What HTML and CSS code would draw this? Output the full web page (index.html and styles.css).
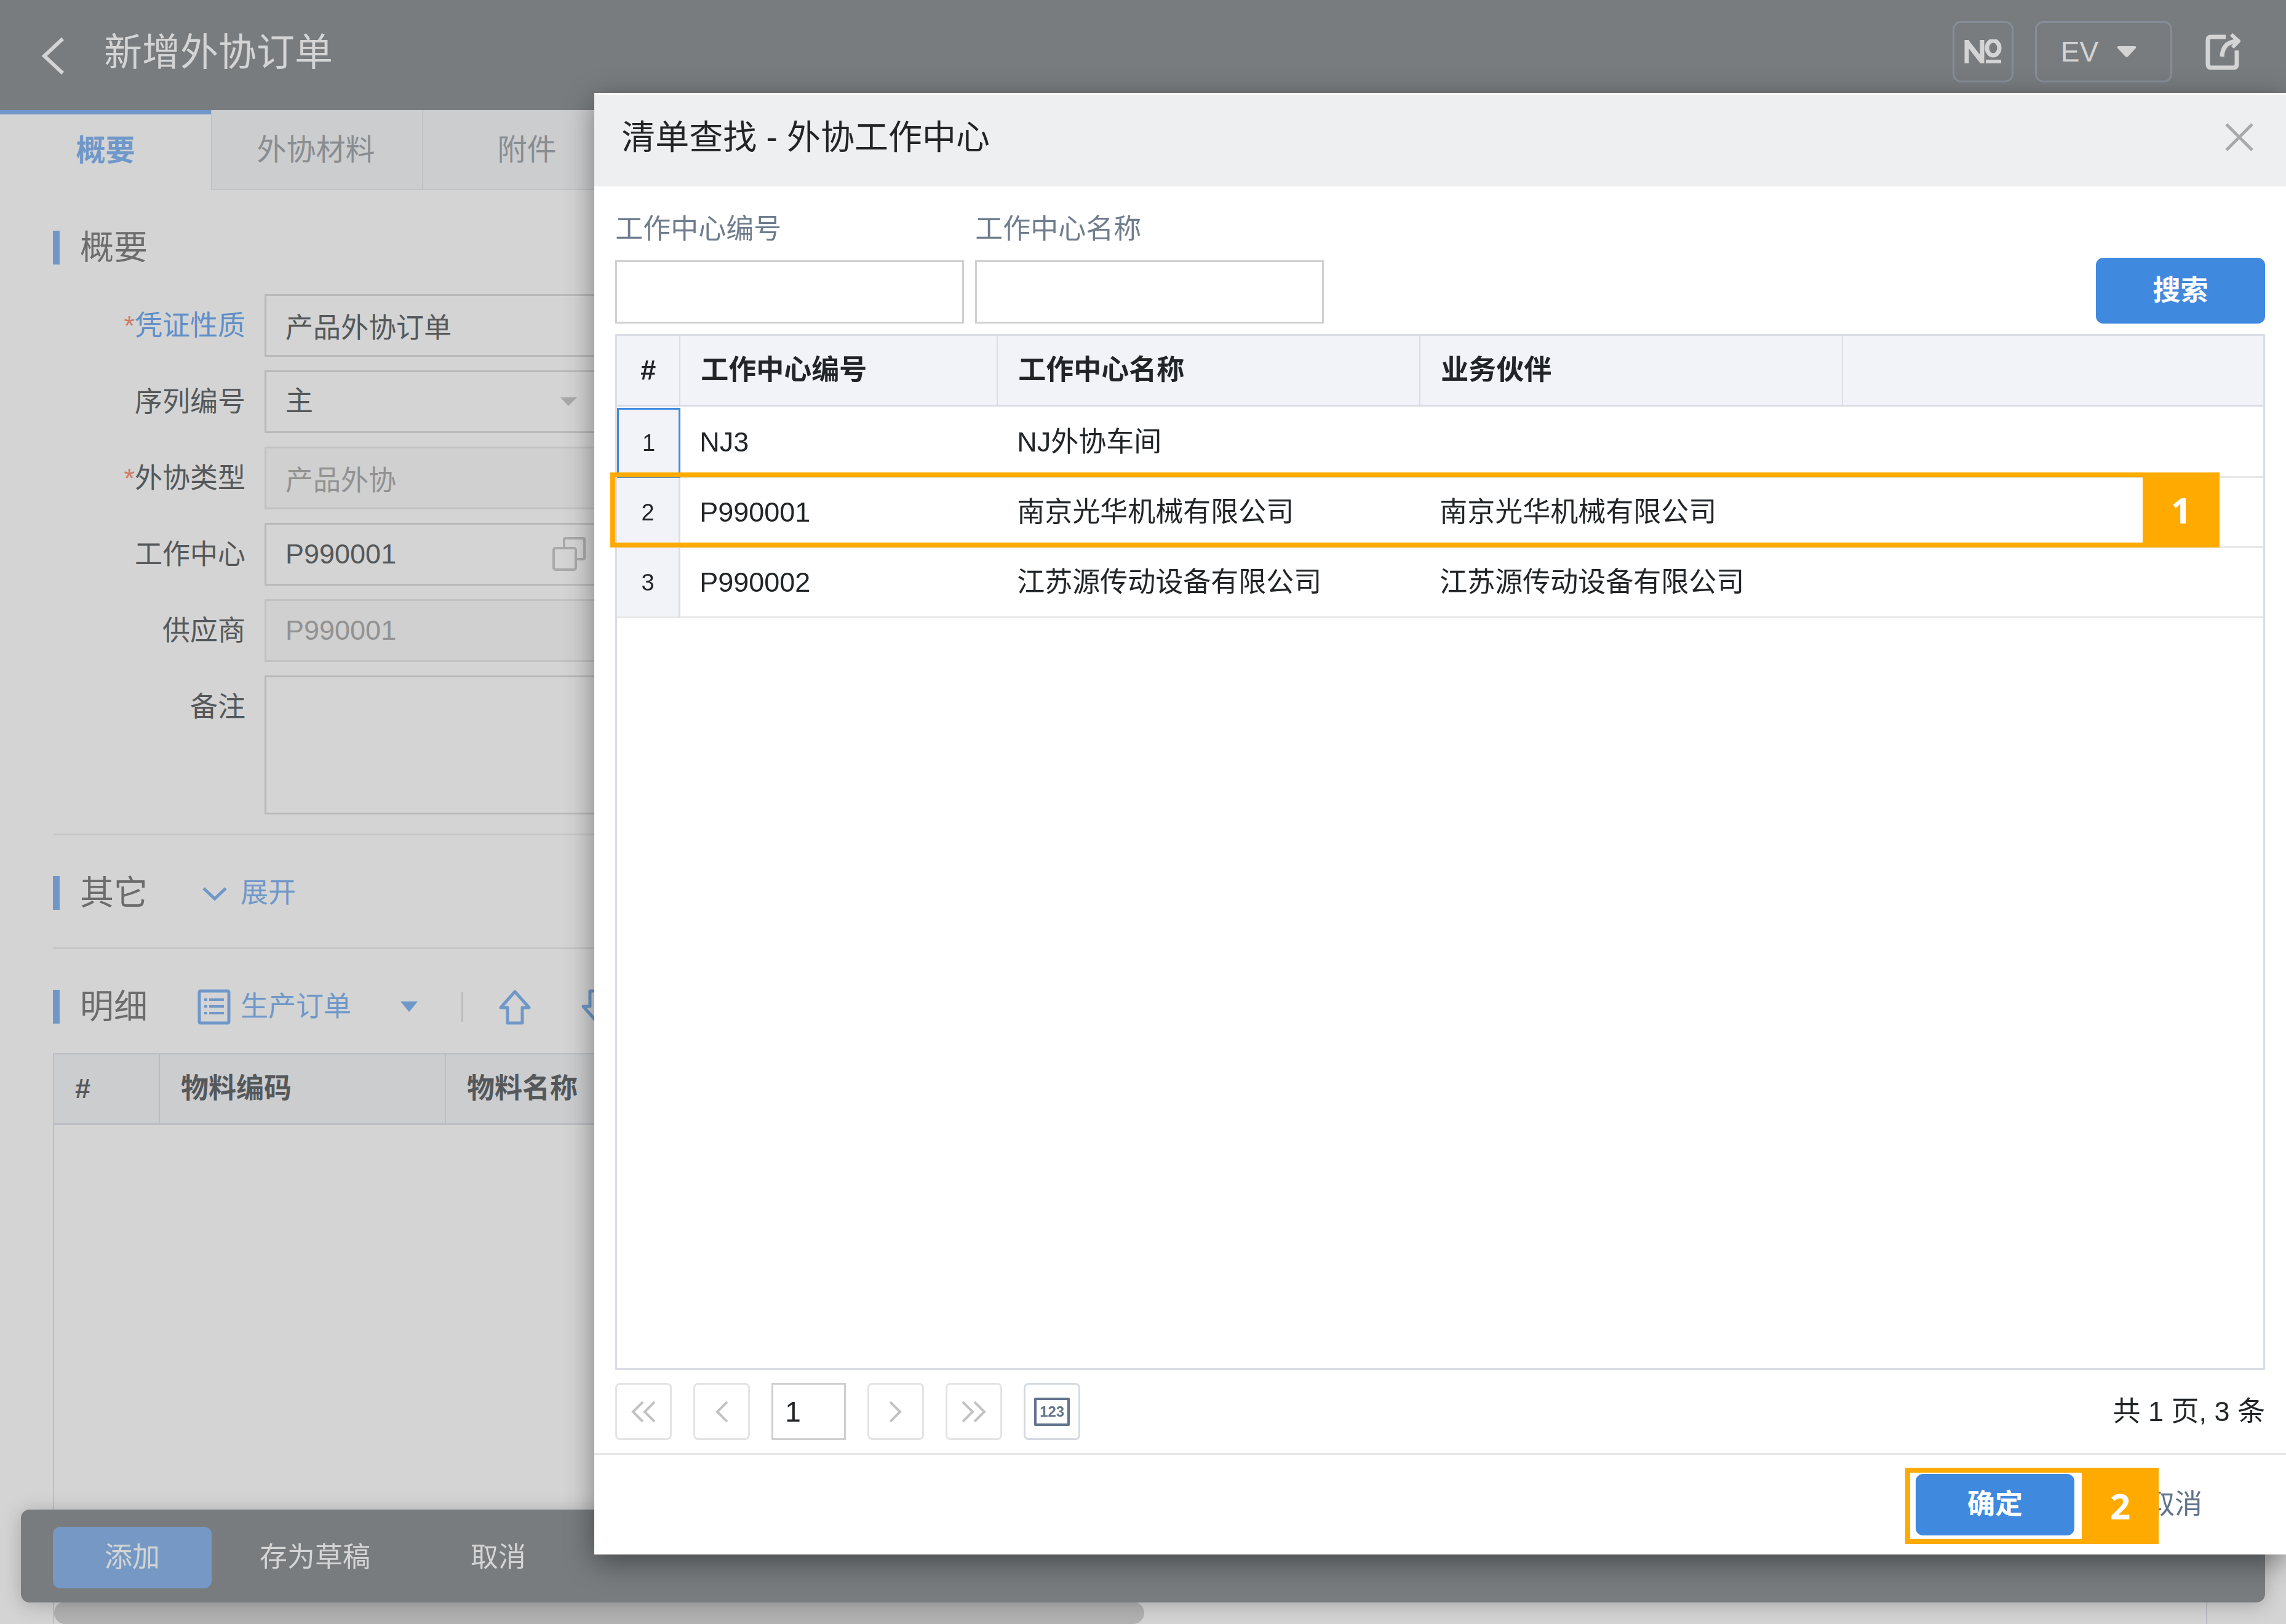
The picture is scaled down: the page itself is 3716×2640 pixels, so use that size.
FILE: index.html
```html
<!DOCTYPE html>
<html lang="zh-CN">
<head>
<meta charset="utf-8">
<title>新增外协订单</title>
<link rel="stylesheet" href="styles.css">
</head>
<body>
<div class="page">
  <header class="topbar">
    <button class="icon-btn back" type="button" aria-label="返回">
      <svg width="40" height="60" viewBox="0 0 40 60" fill="none" stroke="currentColor" stroke-width="6"><path d="M35 2 L5 30 L35 58"/></svg>
    </button>
    <h1 class="topbar-title">新增外协订单</h1>
    <div class="topbar-actions">
      <button class="outline-btn number-btn" type="button" aria-label="编号">
        <svg width="62" height="40" viewBox="0 0 62 40" fill="none" stroke="currentColor" stroke-width="7"><path d="M4 39 V1"/><path d="M4 4 L29 36" stroke-width="8"/><path d="M29 39 V1"/><ellipse cx="47" cy="14" rx="10" ry="12"/><path d="M35 36 H60" stroke-width="6"/></svg>
      </button>
      <button class="outline-btn user-btn" type="button">EV
        <svg width="32" height="18" viewBox="0 0 32 18" fill="currentColor"><path d="M2 0 H30 Q32 1 31 3 L18 17 Q16 18 14 17 L1 3 Q0 1 2 0 Z"/></svg>
      </button>
      <button class="icon-btn share" type="button" aria-label="分享">
        <svg width="60" height="60" viewBox="0 0 60 60" fill="none" stroke="currentColor" stroke-width="7" stroke-linejoin="round"><path d="M33 6 H9 Q4 6 4 11 V50 Q4 56 9 56 H46 Q51 56 51 50 V28"/><path d="M27 38 Q28 15 50 13"/><path d="M42 2 L54 13 L44 23" stroke-width="6"/></svg>
      </button>
    </div>
  </header>

  <nav class="tabs">
    <button class="tab tab-active" type="button">概要</button>
    <button class="tab" type="button">外协材料</button>
    <button class="tab" type="button">附件</button>
  </nav>

  <main class="content">
    <section class="section summary">
      <div class="section-head"><h2>概要</h2></div>
      <div class="form">
        <label for="nature"><span class="required">*</span><span class="link-label">凭证性质</span></label>
        <input id="nature" class="field" type="text" value="产品外协订单">
        <label for="serial">序列编号</label>
        <div class="field-wrap">
          <select id="serial" class="field"><option>主</option></select>
          <svg class="field-icon" width="54" height="14" viewBox="0 0 54 14" fill="currentColor"><path d="M13 0 H40 L26 14 Z"/></svg>
        </div>
        <label for="type"><span class="required">*</span>外协类型</label>
        <input id="type" class="field" type="text" value="产品外协" disabled>
        <label for="center">工作中心</label>
        <div class="field-wrap">
          <input id="center" class="field" type="text" value="P990001">
          <svg class="field-icon" width="54" height="56" viewBox="0 0 54 56" fill="none" stroke="currentColor" stroke-width="4"><path d="M19 18 V4 Q19 2 21 2 H50 Q52 2 52 4 V34 Q52 36 50 36 H38"/><rect x="2" y="18" width="36" height="35" rx="3"/></svg>
        </div>
        <label for="supplier">供应商</label>
        <input id="supplier" class="field" type="text" value="P990001" disabled>
        <label for="remark">备注</label>
        <textarea id="remark" class="field field-area"></textarea>
      </div>
    </section>

    <section class="section others">
      <div class="section-head">
        <h2>其它</h2>
        <button class="text-btn" type="button">
          <svg width="54" height="40" viewBox="0 0 54 40" fill="none" stroke="currentColor" stroke-width="5"><path d="M10 12 L28 29 L46 12"/></svg>展开
        </button>
      </div>
    </section>

    <section class="section details">
      <div class="section-head">
        <h2>明细</h2>
        <button class="text-btn" type="button">
          <svg width="54" height="58" viewBox="0 0 54 58" fill="none" stroke="currentColor" stroke-width="5"><rect x="3" y="3" width="48" height="52" rx="2"/><path d="M19 17 H43 M19 28 H43 M19 39 H43 M11 17 H16 M11 28 H16 M11 39 H16" stroke-width="4"/></svg>生产订单
        </button>
        <button class="icon-btn blue menu-caret" type="button" aria-label="更多">
          <svg width="28" height="17" viewBox="0 0 28 17" fill="currentColor"><path d="M0 0 H28 L14 17 Z"/></svg>
        </button>
        <span class="divider"></span>
        <button class="icon-btn blue move" type="button" aria-label="上移">
          <svg width="52" height="58" viewBox="0 0 52 58" fill="none" stroke="currentColor" stroke-width="5" stroke-linejoin="round"><path d="M26 4 L49 30 H38 V55 H14 V30 H3 Z"/></svg>
        </button>
        <button class="icon-btn blue move" type="button" aria-label="下移">
          <svg width="52" height="58" viewBox="0 0 52 58" fill="none" stroke="currentColor" stroke-width="5" stroke-linejoin="round"><path d="M26 54 L49 28 H38 V3 H14 V28 H3 Z"/></svg>
        </button>
      </div>
      <div class="detail-grid">
        <table class="detail-table">
          <thead><tr><th class="col-index">#</th><th class="col-code">物料编码</th><th>物料名称</th></tr></thead>
        </table>
        <div class="scroll-thumb"></div>
      </div>
    </section>
  </main>

  <footer class="actionbar">
    <button class="btn btn-muted" type="button">添加</button>
    <button class="btn btn-plain" type="button">存为草稿</button>
    <button class="btn btn-plain" type="button">取消</button>
  </footer>
</div>

<div class="dialog" role="dialog" aria-labelledby="dialog-title">
  <div class="dialog-head">
    <h2 id="dialog-title">清单查找 - 外协工作中心</h2>
    <button class="icon-btn close" type="button" aria-label="关闭">
      <svg width="46" height="46" viewBox="0 0 46 46" fill="none" stroke="currentColor" stroke-width="5"><path d="M2 2 L44 44 M44 2 L2 44"/></svg>
    </button>
  </div>
  <div class="dialog-body">
    <form class="search">
      <div class="search-field">
        <label for="q-code">工作中心编号</label>
        <input id="q-code" type="text">
      </div>
      <div class="search-field">
        <label for="q-name">工作中心名称</label>
        <input id="q-name" type="text">
      </div>
      <button class="btn btn-primary search-btn" type="button">搜索</button>
    </form>
    <div class="result">
      <table class="result-table">
        <colgroup><col class="w-index"><col class="w-code"><col class="w-name"><col class="w-name"><col></colgroup>
        <thead><tr><th>#</th><th>工作中心编号</th><th>工作中心名称</th><th>业务伙伴</th><th></th></tr></thead>
        <tbody>
          <tr><td class="selected">1</td><td>NJ3</td><td>NJ外协车间</td><td></td><td></td></tr>
          <tr><td>2</td><td>P990001</td><td>南京光华机械有限公司</td><td>南京光华机械有限公司</td><td></td></tr>
          <tr><td>3</td><td>P990002</td><td>江苏源传动设备有限公司</td><td>江苏源传动设备有限公司</td><td></td></tr>
        </tbody>
      </table>
      <div class="callout callout-row"><span class="callout-num">1</span></div>
    </div>
    <div class="pager">
      <button class="page-btn" type="button" aria-label="首页"><svg width="40" height="34" viewBox="0 0 40 34" fill="none" stroke="currentColor" stroke-width="4"><path d="M19 1 L3 17 L19 33 M38 1 L22 17 L38 33"/></svg></button>
      <button class="page-btn" type="button" aria-label="上一页"><svg width="20" height="34" viewBox="0 0 20 34" fill="none" stroke="currentColor" stroke-width="4"><path d="M19 1 L3 17 L19 33"/></svg></button>
      <input class="page-input" type="text" value="1" aria-label="页码">
      <button class="page-btn" type="button" aria-label="下一页"><svg width="20" height="34" viewBox="0 0 20 34" fill="none" stroke="currentColor" stroke-width="4"><path d="M1 1 L17 17 L1 33"/></svg></button>
      <button class="page-btn" type="button" aria-label="末页"><svg width="40" height="34" viewBox="0 0 40 34" fill="none" stroke="currentColor" stroke-width="4"><path d="M2 1 L18 17 L2 33 M21 1 L37 17 L21 33"/></svg></button>
      <button class="page-btn count-btn" type="button"><span class="count-icon">123</span></button>
      <span class="page-total">共 1 页, 3 条</span>
    </div>
  </div>
  <div class="dialog-foot">
    <div class="ok-wrap">
      <button class="btn btn-primary" type="button">确定</button>
      <div class="callout callout-ok"><span class="callout-num">2</span></div>
    </div>
    <button class="btn cancel-btn" type="button">取消</button>
  </div>
</div>
</body>
</html>
```
FILE: styles.css
```css
* { box-sizing: border-box; }

body {
  margin: 0;
  background: #d4d4d4;
  color: #55585a;
  font-family: "Liberation Sans", "Noto Sans CJK SC", sans-serif;
  font-size: 45px;
  line-height: 60px;
  overflow: hidden;
}

h1, h2 { margin: 0; font-weight: 400; }
button, input, select, textarea { font: inherit; color: inherit; margin: 0; }
button { padding: 0; border: 0; background: none; cursor: pointer; white-space: nowrap; }
svg { display: block; flex: none; }

.page { display: flex; flex-direction: column; height: 100vh; }
.blue { color: #6f98c9; }

/* Top bar */
.topbar {
  display: flex;
  align-items: flex-start;
  flex: none;
  height: 179px;
  padding: 34px 71px 0 67px;
  background: #787c7f;
  color: #d4d4d4;
}
.back { margin-top: 27px; }
.topbar-title { margin-left: 62px; font-size: 62px; line-height: 104px; }
.topbar-actions { display: flex; align-items: center; gap: 35px; margin-left: auto; }
.outline-btn {
  display: flex;
  align-items: center;
  justify-content: center;
  height: 100px;
  border: 3px solid #868f98;
  border-radius: 14px;
}
.number-btn { width: 99px; }
.user-btn { width: 223px; gap: 30px; font-size: 46px; padding-right: 16px; }
.share { margin-left: 19px; }

/* Tabs */
.tabs { display: flex; flex: none; height: 130px; background: #cccdcf; border-bottom: 2px solid #c2c3c7; }
.tab {
  width: 343px;
  height: 130px;
  padding-right: 4px;
  border-left: 2px solid #c0c1c5;
  font-size: 48px;
  color: #898d92;
}
.tab-active {
  padding: 0 0 5px;
  border-left: 0;
  border-top: 7px solid #6f98c9;
  background: #d4d4d4;
  color: #6f98c9;
  font-weight: 700;
}

/* Sections */
.content { display: flex; flex-direction: column; flex: 1; min-height: 0; padding: 0 128px 0 86px; }
.section { padding-top: 66px; border-bottom: 3px solid #c6c6c6; }
.section-head { display: flex; align-items: center; height: 55px; border-left: 11px solid #6f98c9; }
.section-head h2 { margin-left: 33px; font-size: 55px; line-height: 55px; color: #6c6c6c; }
.summary { padding-bottom: 31px; }
.others { padding-bottom: 61px; }
.details { display: flex; flex-direction: column; flex: 1; min-height: 0; border-bottom: 0; }
.text-btn { display: flex; align-items: center; gap: 16px; margin-left: 81px; color: #6f98c9; }
.menu-caret { margin-left: 80px; }
.divider { width: 3px; height: 48px; margin: 0 58px 0 71px; background: #bcbcbc; }
.move { margin-right: 82px; }

/* Form */
.form {
  display: grid;
  grid-template-columns: 313px 560px;
  column-gap: 31px;
  row-gap: 22px;
  margin-top: 48px;
}
.form label { padding-top: 2px; line-height: 100px; text-align: right; }
.required { color: #cf7a66; }
.link-label { color: #5f8fc8; }
.field-wrap { position: relative; }
.field {
  display: block;
  width: 100%;
  height: 102px;
  padding: 0 31px;
  border: 3px solid #b9b9b9;
  border-radius: 0;
  background: #d4d4d4;
  appearance: none;
}
.field:disabled { background: #d0d0d0; border-color: #c2c2c2; color: #929292; opacity: 1; }
.field-area { height: 226px; resize: none; }
.field-icon { position: absolute; right: 38px; top: 0; bottom: 0; margin: auto 0; color: #a9a9a9; }

/* Detail grid */
.detail-grid {
  display: flex;
  flex-direction: column;
  flex: 1;
  margin-top: 48px;
  border: 2px solid #bcbdc3;
  border-bottom: 0;
}
.detail-table { width: 100%; table-layout: fixed; border-collapse: separate; border-spacing: 0; }
.detail-table th {
  height: 115px;
  padding: 0 34px;
  border-right: 2px solid #bcbdc3;
  border-bottom: 3px solid #bcbdc3;
  background: #cccdcf;
  text-align: left;
  font-weight: 700;
}
.detail-table th:last-child { border-right: 0; }
.col-index { width: 172px; }
.col-code { width: 465px; }
.scroll-thumb { width: 1772px; height: 36px; margin-top: auto; border-radius: 18px; background: #b2b2b2; }

/* Bottom actions */
.actionbar {
  position: fixed;
  left: 34px;
  right: 34px;
  bottom: 35px;
  display: flex;
  align-items: center;
  height: 151px;
  padding: 4px 52px 0;
  border-radius: 14px;
  background: rgba(118, 122, 125, 0.98);
  box-shadow: 0 4px 32px rgba(0, 0, 0, 0.22);
  color: #d4d4d4;
}
.btn { height: 100px; border-radius: 12px; }
.btn-muted { width: 258px; margin-right: 78px; background: #7599c4; }
.btn-plain { margin-right: 163px; }
.btn-primary { width: 258px; background: #3f89df; color: #fff; font-weight: 700; }

/* Dialog */
.dialog {
  position: fixed;
  left: 26%;
  right: 0;
  top: 151px;
  bottom: 113px;
  display: flex;
  flex-direction: column;
  background: #fff;
  color: #222527;
  box-shadow: 0 12px 44px rgba(0, 0, 0, 0.42);
}
.dialog-head {
  display: flex;
  justify-content: space-between;
  align-items: center;
  height: 152px;
  padding: 0 53px 11px 44px;
  border-top: 3px solid #fafafb;
  background: #eeeff1;
}
.dialog-head h2 { font-size: 55px; }
.close { color: #a9a9a9; }
.dialog-body { display: flex; flex-direction: column; flex: 1; padding: 40px 34px 0; }
.search { display: flex; align-items: flex-end; gap: 18px; }
.search-field { display: flex; flex-direction: column; gap: 20px; color: #6f7c8e; }
.search-field input { width: 567px; height: 103px; padding: 0 31px; border: 3px solid #d0d0d0; }
.search-btn { width: 275px; height: 107px; margin-left: auto; }

.result { position: relative; flex: 1; margin-top: 17px; border: 3px solid #dadde5; }
.result-table { width: 100%; table-layout: fixed; border-collapse: separate; border-spacing: 0; }
.result-table th {
  height: 115px;
  padding: 0 33px;
  border-right: 2px solid #dadde5;
  border-bottom: 3px solid #dadde5;
  background: #f2f3f8;
  text-align: left;
  font-weight: 700;
}
.result-table th:first-child { padding: 0; text-align: center; }
.result-table th:last-child { border-right: 0; }
.result-table tbody::before { content: ""; display: block; height: 2px; }
.result-table td { height: 114px; padding: 0 31px; border-bottom: 3px solid #e8e8ea; }
.result-table td:first-child {
  padding: 0;
  border-right: 3px solid #dadde5;
  background: #f2f3f8;
  text-align: center;
  font-size: 38px;
}
.result-table td.selected { border: 3px solid #3f89df; }
.w-index { width: 103px; }
.w-code { width: 516px; }
.w-name { width: 687px; }

.pager { display: flex; align-items: center; gap: 35px; padding: 21px 0; }
.page-btn {
  display: flex;
  align-items: center;
  justify-content: center;
  width: 92px;
  height: 93px;
  border: 3px solid #e4e4e4;
  border-radius: 8px;
  color: #c2c2c2;
}
.page-input { width: 121px; height: 93px; padding: 0 19px; border: 3px solid #cfcfcf; font-size: 46px; }
.count-btn { border-color: #d5d9e1; }
.count-icon {
  width: 58px;
  height: 46px;
  border: 4px solid #62738c;
  border-radius: 2px;
  color: #62738c;
  font-size: 24px;
  font-weight: 700;
  line-height: 38px;
}
.page-total { margin-left: auto; }

.dialog-foot {
  display: flex;
  justify-content: flex-end;
  align-items: center;
  height: 165px;
  padding-right: 69px;
  border-top: 3px solid #e6e6e6;
}
.ok-wrap { position: relative; margin-right: 51px; }
.cancel-btn { width: 224px; color: #62738c; }

/* Step callouts */
.callout { position: absolute; border: 8px solid #ffaa01; pointer-events: none; }
.callout-num {
  position: absolute;
  top: -8px;
  bottom: -8px;
  left: 100%;
  display: flex;
  align-items: center;
  justify-content: center;
  width: 125px;
  background: #ffaa01;
  color: #fff;
  font-family: "Noto Sans", sans-serif;
  font-size: 58px;
  font-weight: 700;
}
.callout-row { left: -11px; right: 188px; top: 222px; height: 122px; }
.callout-ok { left: -17px; right: -20px; top: -10px; bottom: -14px; }
```
